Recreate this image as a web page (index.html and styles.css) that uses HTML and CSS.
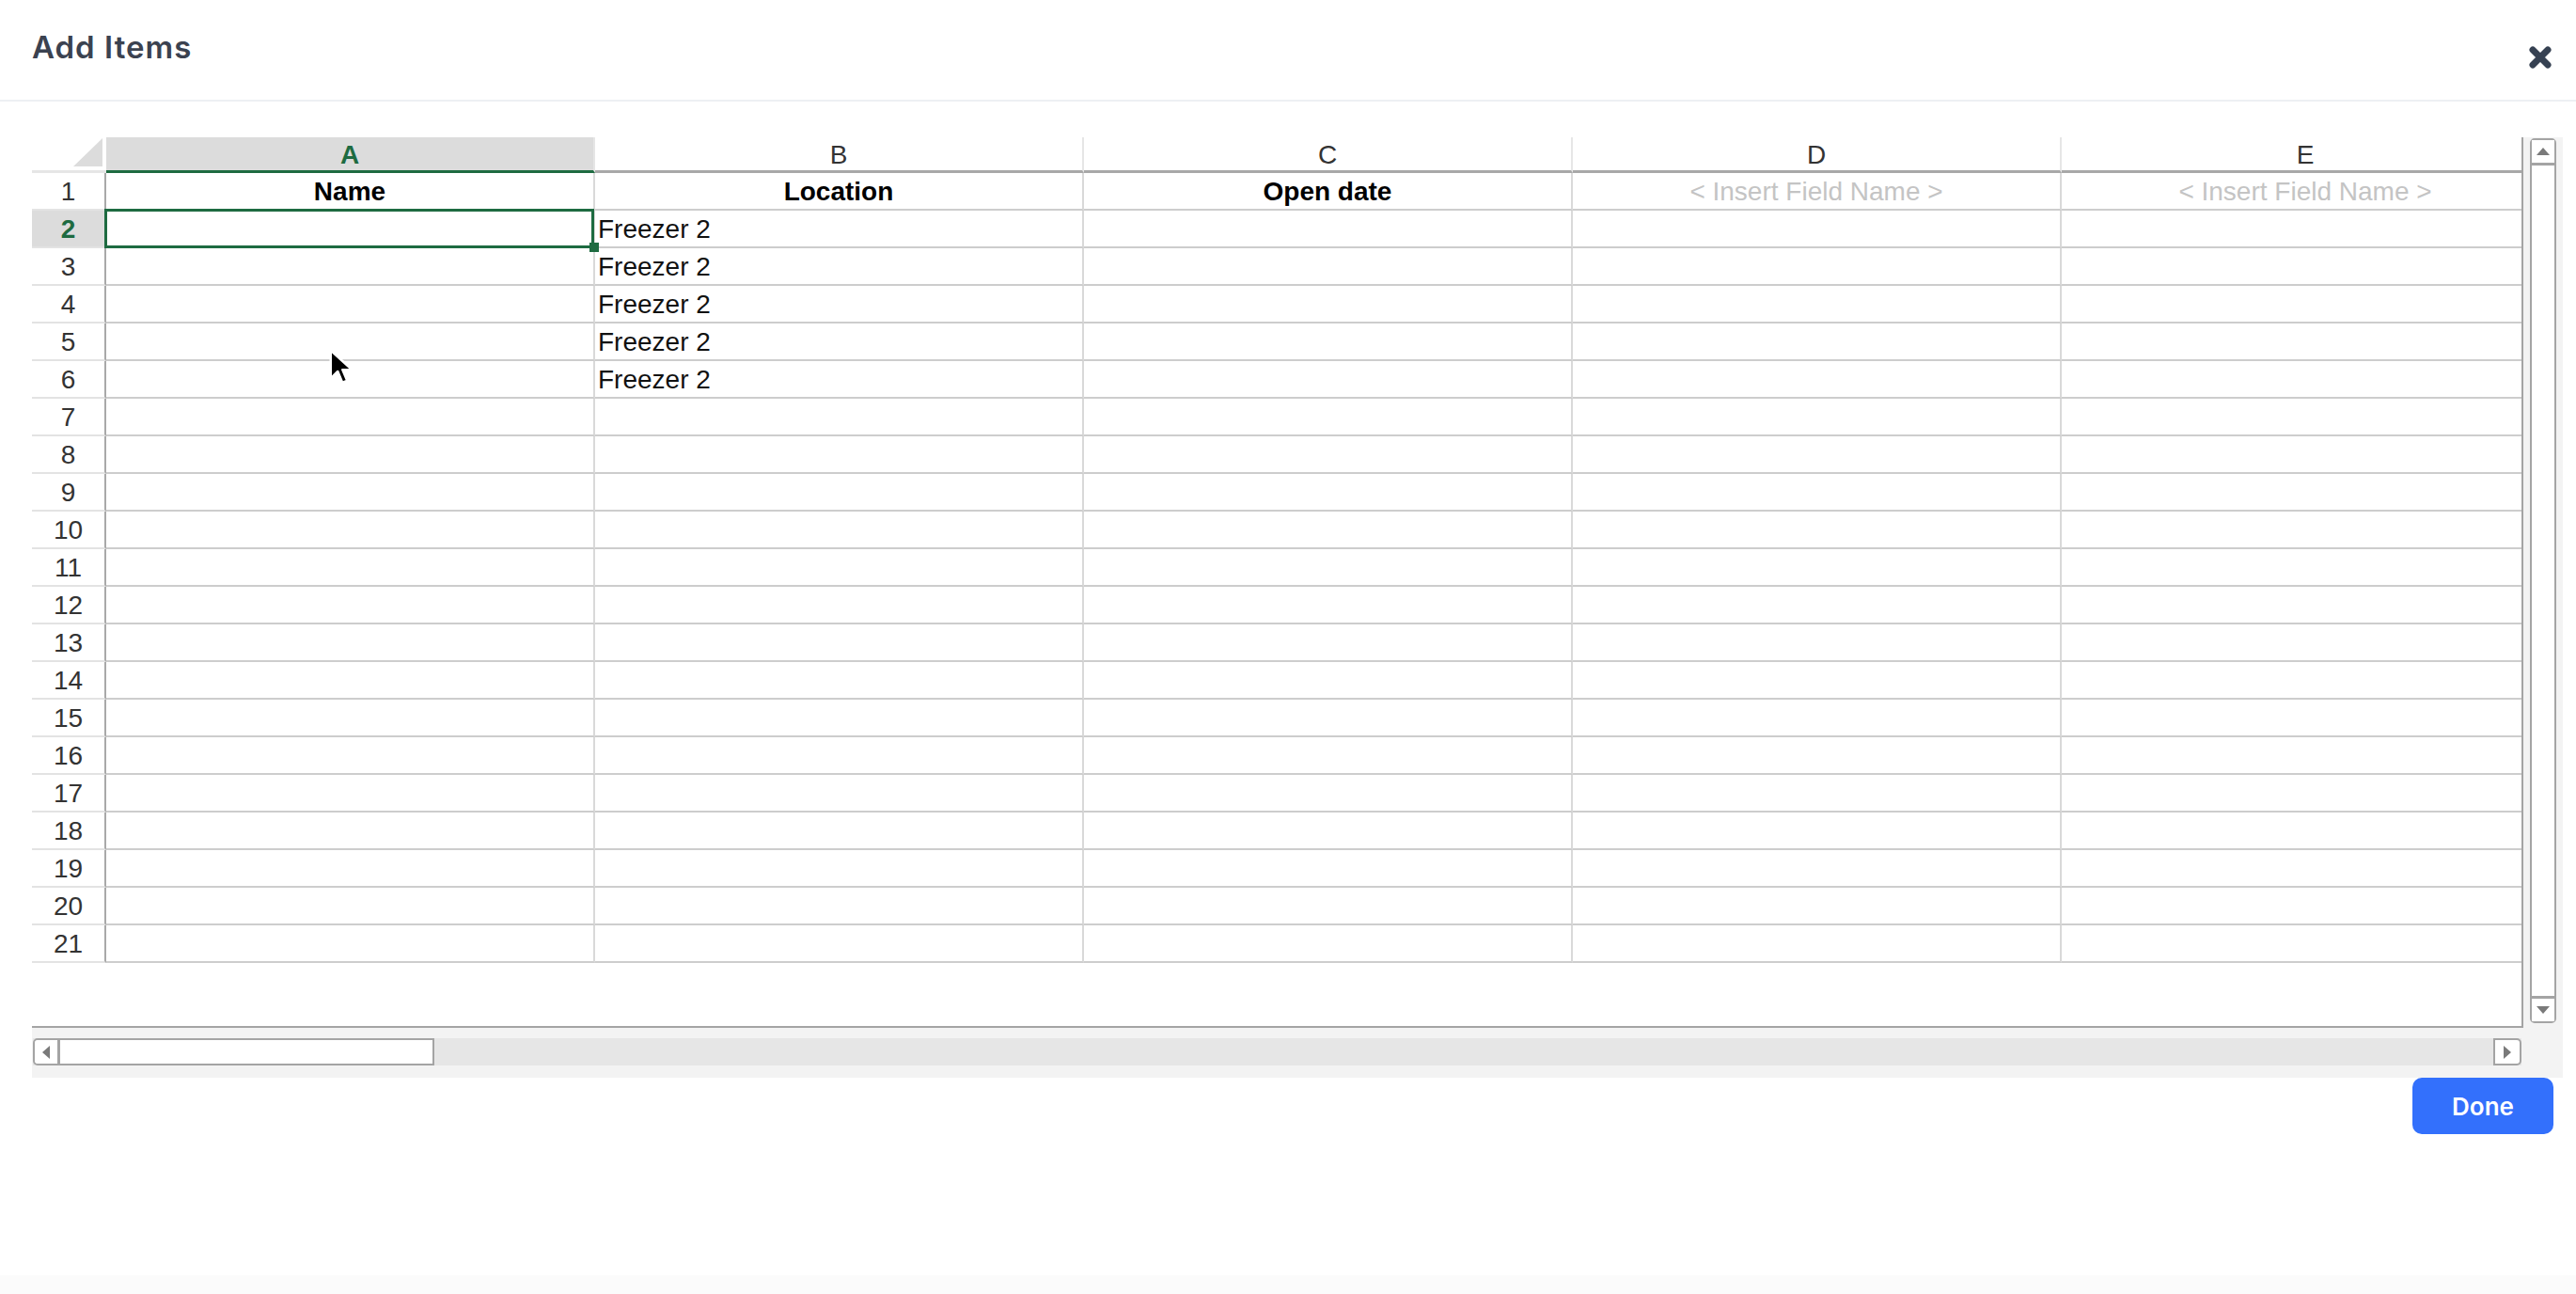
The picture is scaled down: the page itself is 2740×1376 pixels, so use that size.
FILE: index.html
```html
<!DOCTYPE html>
<html lang="en">
<head>
    <meta charset="UTF-8">
    <title>Add Items</title>
    <link rel="stylesheet" href="styles.css">
</head>
<body>
<div class="modal">
    <!-- header -->
    <header class="modal-header">
        <h1 class="modal-title">Add Items</h1>
        <button class="close-btn" aria-label="Close">
            <svg width="26" height="24" viewBox="0 0 26 24">
                <path d="M5 4 L21 20 M21 4 L5 20" stroke="#364152" stroke-width="7" stroke-linecap="round"/>
            </svg>
        </button>
    </header>

    <div class="modal-body">
        <div class="sheet">
            <div class="sheet-main">
                <div class="grid">
                    <div class="grid-row col-heads">
                        <div class="corner">
                            <svg width="31" height="30" viewBox="0 0 31 30"><polygon points="31,0 31,30 0,30" fill="#dcdcdc"/></svg>
                        </div>
                        <div class="col-head active">A</div>
                        <div class="col-head">B</div>
                        <div class="col-head">C</div>
                        <div class="col-head">D</div>
                        <div class="col-head">E</div>
                    </div>
                    <div class="grid-row">
                        <div class="row-head">1</div>
                        <div class="cell field">Name</div>
                        <div class="cell field">Location</div>
                        <div class="cell field">Open date</div>
                        <div class="cell field empty">&lt; Insert Field Name &gt;</div>
                        <div class="cell field empty">&lt; Insert Field Name &gt;</div>
                    </div>
                    <div class="grid-row">
                        <div class="row-head active">2</div>
                        <div class="cell selected"></div>
                        <div class="cell">Freezer 2</div>
                        <div class="cell"></div><div class="cell"></div><div class="cell"></div>
                    </div>
                    <div class="grid-row">
                        <div class="row-head">3</div>
                        <div class="cell"></div>
                        <div class="cell">Freezer 2</div>
                        <div class="cell"></div><div class="cell"></div><div class="cell"></div>
                    </div>
                    <div class="grid-row">
                        <div class="row-head">4</div>
                        <div class="cell"></div>
                        <div class="cell">Freezer 2</div>
                        <div class="cell"></div><div class="cell"></div><div class="cell"></div>
                    </div>
                    <div class="grid-row">
                        <div class="row-head">5</div>
                        <div class="cell"></div>
                        <div class="cell">Freezer 2</div>
                        <div class="cell"></div><div class="cell"></div><div class="cell"></div>
                    </div>
                    <div class="grid-row">
                        <div class="row-head">6</div>
                        <div class="cell"></div>
                        <div class="cell">Freezer 2</div>
                        <div class="cell"></div><div class="cell"></div><div class="cell"></div>
                    </div>
                    <div class="grid-row"><div class="row-head">7</div><div class="cell"></div><div class="cell"></div><div class="cell"></div><div class="cell"></div><div class="cell"></div></div>
                    <div class="grid-row"><div class="row-head">8</div><div class="cell"></div><div class="cell"></div><div class="cell"></div><div class="cell"></div><div class="cell"></div></div>
                    <div class="grid-row"><div class="row-head">9</div><div class="cell"></div><div class="cell"></div><div class="cell"></div><div class="cell"></div><div class="cell"></div></div>
                    <div class="grid-row"><div class="row-head">10</div><div class="cell"></div><div class="cell"></div><div class="cell"></div><div class="cell"></div><div class="cell"></div></div>
                    <div class="grid-row"><div class="row-head">11</div><div class="cell"></div><div class="cell"></div><div class="cell"></div><div class="cell"></div><div class="cell"></div></div>
                    <div class="grid-row"><div class="row-head">12</div><div class="cell"></div><div class="cell"></div><div class="cell"></div><div class="cell"></div><div class="cell"></div></div>
                    <div class="grid-row"><div class="row-head">13</div><div class="cell"></div><div class="cell"></div><div class="cell"></div><div class="cell"></div><div class="cell"></div></div>
                    <div class="grid-row"><div class="row-head">14</div><div class="cell"></div><div class="cell"></div><div class="cell"></div><div class="cell"></div><div class="cell"></div></div>
                    <div class="grid-row"><div class="row-head">15</div><div class="cell"></div><div class="cell"></div><div class="cell"></div><div class="cell"></div><div class="cell"></div></div>
                    <div class="grid-row"><div class="row-head">16</div><div class="cell"></div><div class="cell"></div><div class="cell"></div><div class="cell"></div><div class="cell"></div></div>
                    <div class="grid-row"><div class="row-head">17</div><div class="cell"></div><div class="cell"></div><div class="cell"></div><div class="cell"></div><div class="cell"></div></div>
                    <div class="grid-row"><div class="row-head">18</div><div class="cell"></div><div class="cell"></div><div class="cell"></div><div class="cell"></div><div class="cell"></div></div>
                    <div class="grid-row"><div class="row-head">19</div><div class="cell"></div><div class="cell"></div><div class="cell"></div><div class="cell"></div><div class="cell"></div></div>
                    <div class="grid-row"><div class="row-head">20</div><div class="cell"></div><div class="cell"></div><div class="cell"></div><div class="cell"></div><div class="cell"></div></div>
                    <div class="grid-row"><div class="row-head">21</div><div class="cell"></div><div class="cell"></div><div class="cell"></div><div class="cell"></div><div class="cell"></div></div>
                </div>

                <!-- vertical scrollbar -->
                <div class="vscroll-panel">
                    <div class="vscroll">
                        <div class="sb-btn up"><span class="tri tri-up"></span></div>
                        <div class="sb-thumb"></div>
                        <div class="sb-btn down"><span class="tri tri-down"></span></div>
                    </div>
                </div>
            </div>

            <!-- horizontal scrollbar -->
            <div class="hscroll-panel">
                <div class="htrack">
                    <div class="hthumb">
                        <div class="sb-btn left"><span class="tri tri-left"></span></div>
                    </div>
                    <div class="sb-btn right"><span class="tri tri-right"></span></div>
                </div>
            </div>

            <svg class="cursor" width="28" height="40" viewBox="0 0 22 32">
                <path d="M2 2 L2 26 L8 20 L12 29.5 L16 27.8 L12 18.5 L20 18.5 Z" fill="#000" stroke="#fff" stroke-width="2" stroke-linejoin="round"/>
            </svg>
        </div>

        <div class="modal-footer">
            <button class="done-btn">Done</button>
        </div>
    </div>
</div>
</body>
</html>
```

FILE: styles.css
```css
body {
    margin: 0;
    background: #fbfbfb;
    font-family: 'Liberation Sans', Arial, sans-serif;
    color: #333;
}
.modal {
    height: 1356px;
    background: #fff;
}
.modal-header {
    display: flex;
    justify-content: space-between;
    align-items: flex-start;
    height: 106px;
    padding: 0 25px 0 34px;
    border-bottom: 2px solid #edf0f3;
}
.modal-title {
    margin: 30px 0 0;
    font-family: Inter, 'Open Sans', sans-serif;
    font-size: 33px;
    line-height: 40px;
    font-weight: 600;
    color: #3b4250;
    letter-spacing: 1px;
}
.close-btn {
    margin-top: 49px;
    padding: 0;
    border: 0;
    background: none;
    width: 26px;
    height: 24px;
    cursor: pointer;
}
.close-btn svg { display: block; }

.modal-body {
    padding: 38px 14px 0 34px;
}
.sheet {
    position: relative;
}
.sheet-main {
    display: flex;
}
.grid {
    flex: 1;
    height: 945px;
    overflow: hidden;
    background: #fff;
    border-right: 2px solid #a4a4a4;
    border-bottom: 2px solid #a4a4a4;
}
.grid-row {
    display: grid;
    grid-template-columns: 79px repeat(5, 520px);
    font-size: 28px;
    line-height: 36px;
}
.grid-row > div {
    box-sizing: border-box;
    height: 40px;
    padding-top: 2px;
    white-space: nowrap;
    overflow: hidden;
}
.col-heads > div {
    height: 38px;
    line-height: 33px;
    border-bottom: 3px solid #a8a8a8;
}
.corner {
    display: flex;
    justify-content: flex-end;
    align-items: flex-end;
    padding: 0 4px 4px 0;
    border-bottom-color: #e6e6e6 !important;
}
.corner svg { display: block; }
.col-head {
    text-align: center;
    color: #333;
    border-right: 2px solid #e6e6e6;
}
.col-head.active {
    background: #dcdcdc;
    color: #1e6b41;
    font-weight: bold;
    border-bottom-color: #1e6b41;
}
.row-head {
    text-align: center;
    color: #333;
    border-right: 2px solid #a9a9a9;
    border-bottom: 2px solid #e3e3e3;
}
.row-head.active {
    background: #dcdcdc;
    color: #1e6b41;
    font-weight: bold;
}
.cell {
    padding-left: 3px;
    color: #111;
    border-right: 2px solid #d9d9d9;
    border-bottom: 2px solid #cdcdcd;
}
.cell.field {
    padding-left: 0;
    text-align: center;
    font-weight: bold;
    color: #000;
}
.cell.field.empty {
    font-weight: normal;
    color: #c4c4c4;
}
.grid-row > .cell.selected {
    position: relative;
    overflow: visible;
}
.cell.selected::after {
    content: '';
    position: absolute;
    top: -2px;
    left: -2px;
    right: -1px;
    bottom: -2px;
    border: 3px solid #1e6b41;
}
.cell.selected::before {
    content: '';
    position: absolute;
    right: -6px;
    bottom: -6px;
    width: 10px;
    height: 10px;
    background: #1e6b41;
    z-index: 1;
}

/* scrollbars */
.vscroll-panel {
    width: 42px;
    padding: 1px 7px 5px;
    box-sizing: border-box;
    background: #f3f3f3;
}
.vscroll {
    height: 100%;
    display: flex;
    flex-direction: column;
    background: #fff;
    border: 2px solid #a4a4a4;
    border-radius: 5px;
    box-sizing: border-box;
}
.sb-btn {
    display: flex;
    align-items: center;
    justify-content: center;
    background: #fff;
}
.sb-btn.up { height: 24px; border-bottom: 3px solid #a4a4a4; }
.sb-btn.down { height: 24px; border-top: 3px solid #a4a4a4; }
.sb-thumb { flex: 1; }
.tri {
    width: 0;
    height: 0;
    border-style: solid;
    border-color: transparent;
}
.tri-up { border-width: 0 7px 8px; border-bottom-color: #7a7a7a; }
.tri-down { border-width: 8px 7px 0; border-top-color: #7a7a7a; }
.tri-left { border-width: 7px 8px 7px 0; border-right-color: #7a7a7a; }
.tri-right { border-width: 7px 0 7px 8px; border-left-color: #7a7a7a; }

.hscroll-panel {
    padding: 11px 44px 13px 1px;
    background: #f3f3f3;
}
.htrack {
    display: flex;
    justify-content: space-between;
    height: 29px;
    background: #e6e6e6;
}
.hthumb {
    width: 427px;
    display: flex;
    background: #fff;
    border: 2px solid #a4a4a4;
    border-radius: 5px 0 0 5px;
    box-sizing: border-box;
}
.sb-btn.left {
    width: 24px;
    border-right: 3px solid #a4a4a4;
    border-radius: 4px 0 0 4px;
}
.sb-btn.right {
    width: 30px;
    border: 2px solid #a4a4a4;
    border-radius: 0 5px 5px 0;
    box-sizing: border-box;
}

.cursor {
    position: absolute;
    left: 315px;
    top: 224px;
}

.modal-footer {
    display: flex;
    justify-content: flex-end;
    padding-right: 10px;
}
.done-btn {
    width: 150px;
    height: 60px;
    border: 0;
    border-radius: 10px;
    background: #3370fc;
    color: #fff;
    font-family: Inter, 'Open Sans', sans-serif;
    font-size: 26px;
    font-weight: 600;
    cursor: pointer;
}
```
